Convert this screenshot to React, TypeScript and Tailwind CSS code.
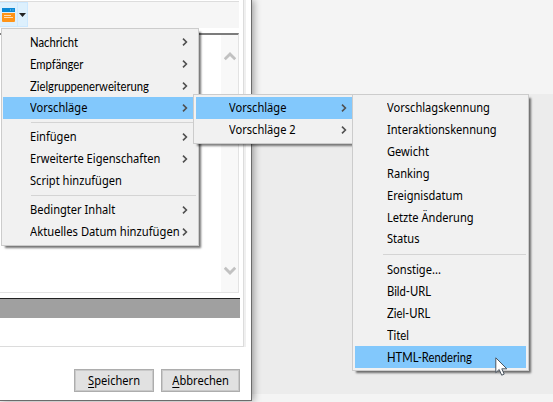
import type { ReactNode } from "react";

const FONT = "font-['Noto_Sans','Open_Sans',sans-serif]";
const LATO = "pt-px font-['Lato','Noto_Sans',sans-serif] text-[12.5px] scale-x-[0.9]";
const NARROW = "scale-x-[0.925]";

function Chevron({ className }: { className: string }) {
  return (
    <svg className={`h-[8px] w-[6px] shrink-0 ${className}`} viewBox="0 0 6 8" fill="none" stroke="#505050" strokeWidth="1.6">
      <path d="M1 0.6 L4.4 4 L1 7.4" />
    </svg>
  );
}

type ItemProps = {
  label: string;
  text?: string;
  arrow?: string;
  active?: boolean;
  indent?: string;
  height?: string;
};

function Item({ label, text = NARROW, arrow, active, indent = "pl-[27px]", height = "h-[22px]" }: ItemProps) {
  return (
    <div className={`flex shrink-0 items-center ${height} ${indent} ${active ? "bg-[#82c8fc]" : ""}`}>
      <span className={`w-0 flex-1 origin-left whitespace-pre ${text}`}>{label}</span>
      {arrow && <Chevron className={arrow} />}
    </div>
  );
}

function Separator({ className }: { className: string }) {
  return <div className={`h-px shrink-0 bg-[#d4d4d4] ${className}`} />;
}

function Button({ first, rest, width }: { first: string; rest: string; width: string }) {
  return (
    <div className={`flex h-[23px] items-center justify-center border border-[#adadad] bg-[#e1e1e1] outline-1 -outline-offset-2 outline-[#c9c9c9] ${width}`}>
      <span className={NARROW}>
        <span className="underline underline-offset-2">{first}</span>
        {rest}
      </span>
    </div>
  );
}

function Menu({ className, children }: { className: string; children: ReactNode }) {
  return <div className={`absolute flex flex-col border border-[#cccccc] bg-[#f1f1f1] ${className}`}>{children}</div>;
}

export default function App() {
  return (
    <div className={`relative h-[402px] w-[553px] overflow-hidden bg-[#f4f4f4] text-[12px] leading-[16px] text-black ${FONT}`}>
      <div className="flex h-full flex-col">
        <div className="h-[94px]" />
        <div className="h-[300px] bg-[#ececec]" />
      </div>

      {/* Dialog */}
      <div className="absolute top-0 left-0 flex h-[401px] w-[252px] flex-col border-r border-b border-[#6b6b6b] bg-white shadow-[2px_0_7px_rgba(0,0,0,0.35)]">
        <div className="flex h-[347px] w-[246px] shrink-0 border-r-2 border-[#f0f0f0]">
          <div className="flex w-[244px] flex-col border-r border-b border-[#dcdcdc]">
            <div className="mt-px flex h-[27px] w-[239px] shrink-0 items-start border-t border-[#dddddd] bg-[#f6f6f6]">
              <div className="flex h-[25px] w-[28px] items-center border border-l-0 border-[#cce8ff] bg-[#ddf0fd]">
                <svg className="mt-px ml-[2px] h-[14px] w-[13px]" viewBox="0 0 13 14">
                  <path d="M0 0H13V4H0Z" fill="#0c88d4" />
                  <path d="M8 1.4h1v1h-1zM10.5 1.4h1v1h-1z" fill="#8fd0f5" />
                  <path d="M0 5H13V13Q13 14 12 14H1Q0 14 0 13Z" fill="#ff9418" />
                  <path d="M2 7.5H9M2 9.5H11" stroke="#ffe0b4" strokeWidth="1.2" />
                </svg>
                <div className="ml-[2px] h-full w-px bg-[#cce8ff]" />
                <svg className="ml-[1px] h-[4px] w-[7px]" viewBox="0 0 7 4">
                  <path d="M0 0H7L3.5 4Z" fill="#222222" />
                </svg>
              </div>
            </div>
            <div className="mt-[5px] flex h-[260px] w-[239px] shrink-0 justify-end border-t-2 border-r border-b border-t-[#7c7c7c] border-r-[#e3e3e3] border-b-[#e3e3e3]">
              <div className="flex w-[17px] flex-col items-center justify-between bg-[#f8f8f8] pt-[16px] pb-[16px]">
                <svg className="h-[10px] w-[12px]" viewBox="0 0 12 10" fill="none" stroke="#c1c1c1" strokeWidth="3">
                  <path d="M0.7 8.3L6 3L11.3 8.3" />
                </svg>
                <svg className="h-[10px] w-[12px]" viewBox="0 0 12 10" fill="none" stroke="#c1c1c1" strokeWidth="3">
                  <path d="M0.7 1.7L6 7L11.3 1.7" />
                </svg>
              </div>
            </div>
            <div className="mt-[5px] h-[20px] w-[240px] shrink-0 border-t border-[#222222] bg-[#a0a0a0]" />
          </div>
        </div>
        <div className="mt-[22px] flex gap-[7px] pl-[74px]">
          <Button first="S" rest="peichern" width="w-[80px]" />
          <Button first="A" rest="bbrechen" width="w-[79px]" />
        </div>
      </div>

      {/* Top-level menu */}
      <Menu className="top-[28px] left-px h-[218px] w-[198px] pt-[2px] pr-[2px] pl-px shadow-[3px_3px_2px_-1px_rgba(0,0,0,0.55)]">
        <Item label="Nachricht" arrow="mr-[8px]" text={LATO} />
        <Item label="Empfänger" arrow="mr-[8px]" text={LATO} />
        <Item label="Zielgruppenerweiterung" arrow="mr-[8px]" text={LATO} />
        <Item label="Vorschläge" arrow="mr-[8px]" active />
        <Separator className="mt-[3px] mb-[3px] ml-[28px]" />
        <Item label="Einfügen" arrow="mr-[8px]" />
        <Item label="Erweiterte Eigenschaften" arrow="mr-[8px]" />
        <Item label="Script hinzufügen" />
        <Separator className="mt-[3px] mb-[3px] ml-[28px]" />
        <Item label="Bedingter Inhalt" arrow="mr-[8px]" />
        <Item label="Aktuelles Datum hinzufügen" arrow="mr-[8px]" text="scale-x-[0.935]" />
      </Menu>

      {/* Proposals submenu */}
      <Menu className="top-[94px] left-[193px] h-[50px] w-[160px] pt-[2px] pl-[2px] shadow-[3px_3px_2px_-1px_rgba(0,0,0,0.5)]">
        <Item label="Vorschläge" arrow="mr-[5px]" active indent="pl-[33px]" />
        <Item label="Vorschläge 2" arrow="mr-[5px]" indent="pl-[33px]" />
      </Menu>

      {/* Fields submenu */}
      <Menu className="top-[94px] left-[352px] h-[277px] w-[177px] px-[2px] pt-[2px] shadow-[3px_3px_2px_-1px_rgba(0,0,0,0.55)]">
        <Item label="Vorschlagskennung" indent="pl-[32px]" />
        <Item label="Interaktionskennung" indent="pl-[32px]" />
        <Item label="Gewicht" indent="pl-[32px]" />
        <Item label="Ranking" indent="pl-[32px]" />
        <Item label="Ereignisdatum" indent="pl-[32px]" />
        <Item label="Letzte Änderung" indent="pl-[32px]" height="h-[21px]" />
        <Item label="Status" indent="pl-[32px]" />
        <Separator className="mt-[4px] mb-[4px] ml-[28px]" />
        <Item label="Sonstige..." indent="pl-[32px]" height="h-[21px]" />
        <Item label="Bild-URL" indent="pl-[32px]" text={LATO} />
        <Item label="Ziel-URL" indent="pl-[32px]" text={LATO} />
        <Item label="Titel" indent="pl-[32px]" text={LATO} />
        <Item label="HTML-Rendering" active indent="pl-[32px]" text={LATO} />
      </Menu>

      {/* Pointer */}
      <svg className="absolute top-[357px] left-[495px] h-[20px] w-[14px]" viewBox="0 0 14 20">
        <path d="M0.8 0.8V15.6L4.2 12.5L6.7 18.2L9.2 17.1L6.8 11.8H11.8Z" fill="white" stroke="#4a5560" strokeWidth="1" />
      </svg>
    </div>
  );
}
